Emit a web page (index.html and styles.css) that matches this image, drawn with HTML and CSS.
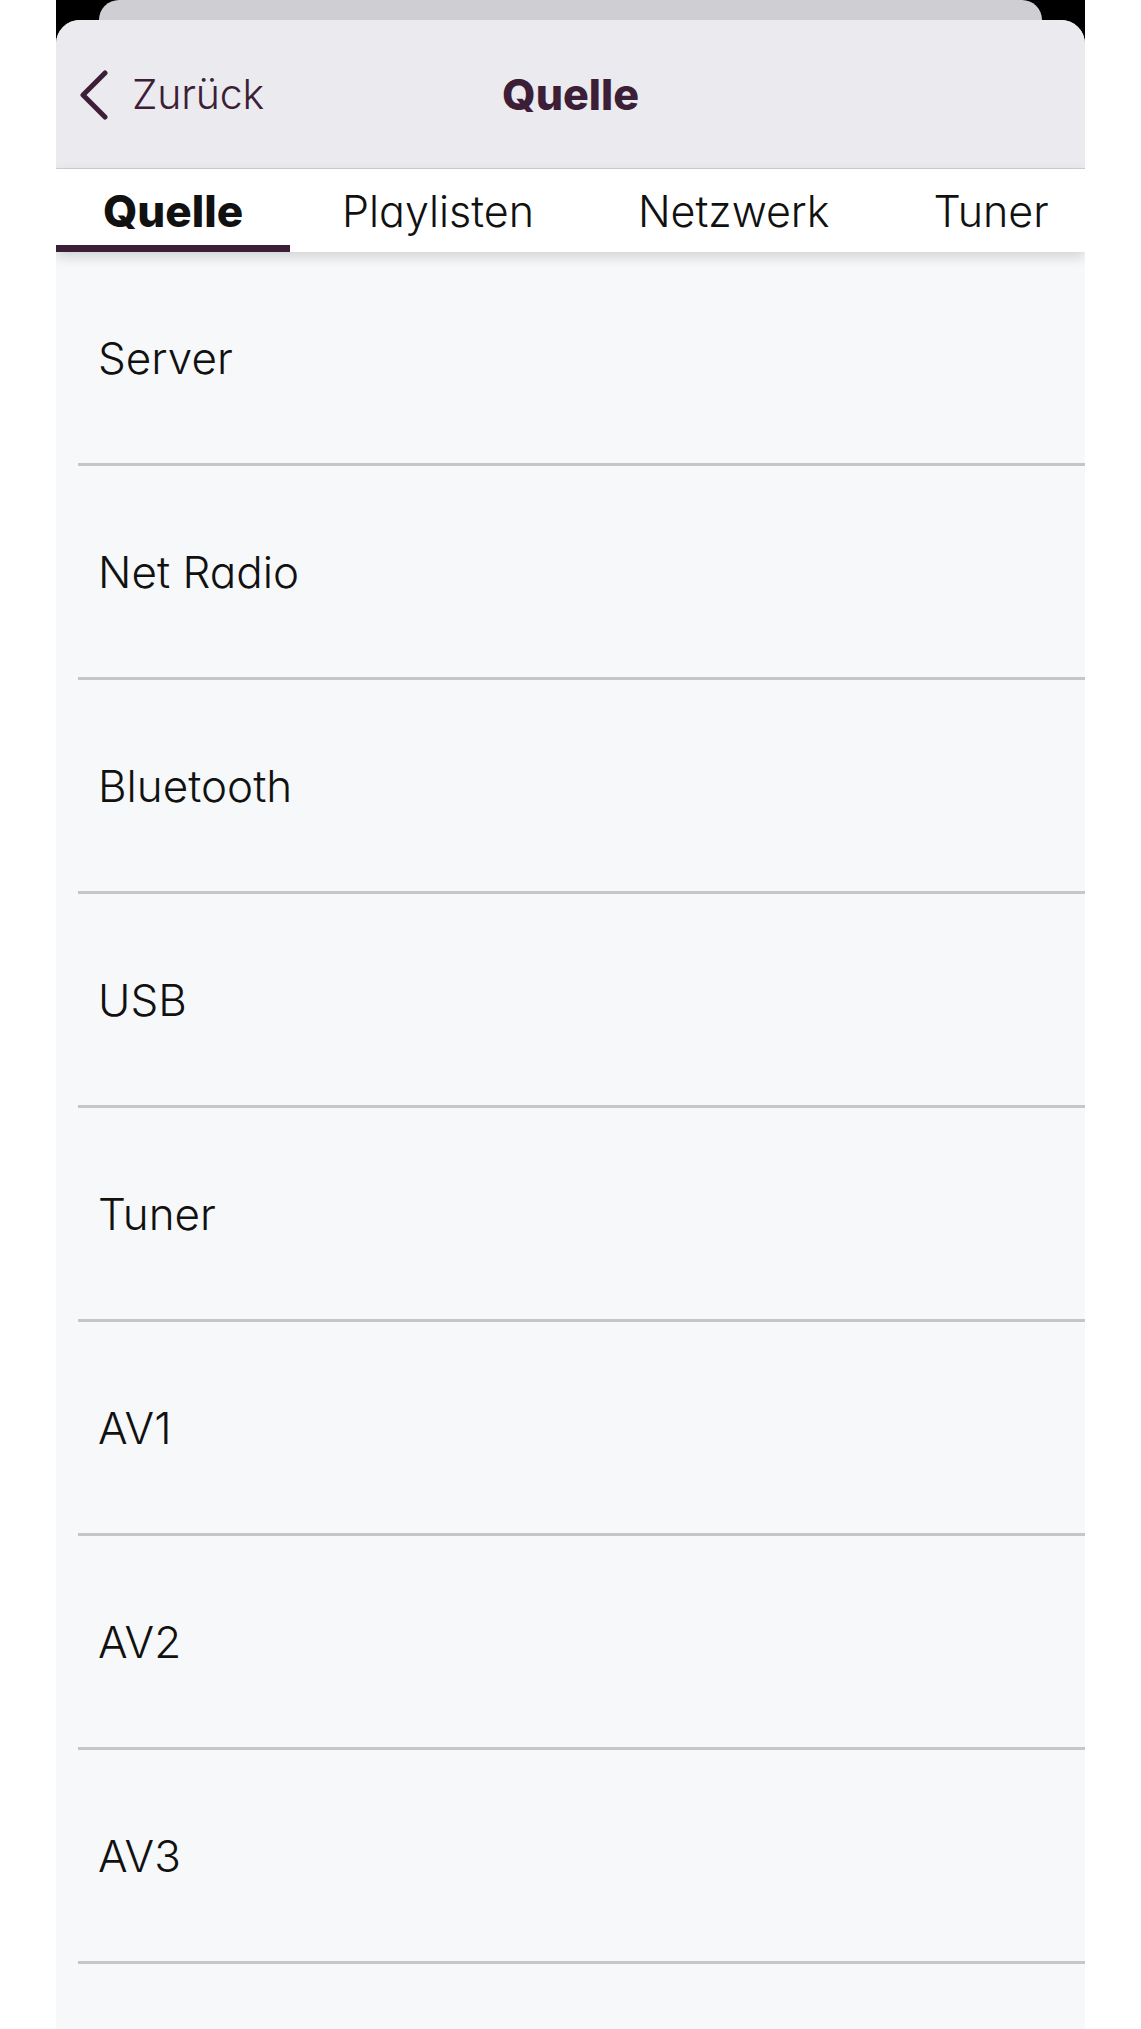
FILE: index.html
```html
<!DOCTYPE html>
<html lang="de">
<head>
<meta charset="utf-8">
<title>Quelle</title>
<link rel="stylesheet" href="styles.css">
</head>
<body>
<div class="device">
  <div class="back-card"></div>
  <div class="sheet">
    <header class="nav">
      <button class="back" type="button">
        <svg class="chevron" width="30" height="50" viewBox="0 0 30 50" aria-hidden="true">
          <path d="M26 3 L4 25 L26 47" fill="none" stroke="currentColor" stroke-width="5" stroke-linecap="round" stroke-linejoin="round"/>
        </svg>
        <span>Zurück</span>
      </button>
      <h1 class="title">Quelle</h1>
      <div class="nav-spacer"></div>
    </header>
    <nav class="tabs">
      <div class="tab tab-active">Quelle</div>
      <div class="tab">Playlisten</div>
      <div class="tab">Netzwerk</div>
      <div class="tab">Tuner</div>
    </nav>
    <ul class="list">
      <li class="row">Server</li>
      <li class="row">Net Radio</li>
      <li class="row">Bluetooth</li>
      <li class="row">USB</li>
      <li class="row">Tuner</li>
      <li class="row">AV1</li>
      <li class="row">AV2</li>
      <li class="row">AV3</li>
    </ul>
  </div>
</div>
</body>
</html>
```
FILE: styles.css
```css
html, body {
  margin: 0;
  padding: 0;
  background: #ffffff;
}

body {
  font-family: "Inter", "Liberation Sans", sans-serif;
  font-feature-settings: "cv11";
  color: #111111;
  overflow: hidden;
}

.device {
  margin: 0 56px;
  background: #000000;
  display: flex;
  flex-direction: column;
  min-height: 100vh;
}

.back-card {
  height: 20px;
  margin: 0 43px;
  background: #cfced3;
  border-radius: 20px 20px 0 0;
}

.sheet {
  flex: 1;
  background: #f7f8fa;
  border-radius: 24px 24px 0 0;
  overflow: hidden;
  display: flex;
  flex-direction: column;
}

.nav {
  height: 148px;
  background: #ebeaef;
  border-bottom: 1px solid #cfcfd2;
  display: grid;
  grid-template-columns: 1fr auto 1fr;
  align-items: center;
  color: #3c1e37;
}

.back {
  justify-self: start;
  display: flex;
  align-items: center;
  gap: 23px;
  padding: 0 0 0 23px;
  margin: 0;
  border: 0;
  background: none;
  color: #3c1e37;
  font: inherit;
  font-size: 41px;
  font-weight: 300;
  letter-spacing: -0.2px;
}

.chevron {
  display: block;
  margin-top: 2px;
}

.title {
  margin: 0;
  font-size: 43px;
  font-weight: 800;
}

.tabs {
  height: 83px;
  background: #ffffff;
  display: flex;
  align-items: stretch;
  box-shadow: 0 5px 12px rgba(0, 0, 0, 0.15);
  position: relative;
  z-index: 1;
  white-space: nowrap;
}

.tab {
  flex: none;
  display: flex;
  align-items: center;
  justify-content: center;
  padding: 0 52px;
  font-size: 43px;
  font-weight: 300;
  color: #111111;
  box-sizing: border-box;
}

.tab-active {
  width: 234px;
  padding: 0;
  font-size: 44px;
  font-weight: 800;
  box-shadow: inset 0 -7px 0 #3c1e37;
}

.list {
  list-style: none;
  margin: 0;
  padding: 0;
}

.row {
  height: 211px;
  margin-left: 22px;
  padding-left: 20px;
  border-bottom: 3px solid #c6c6c8;
  display: flex;
  align-items: center;
  font-size: 44px;
  font-weight: 300;
  color: #111111;
}
```
